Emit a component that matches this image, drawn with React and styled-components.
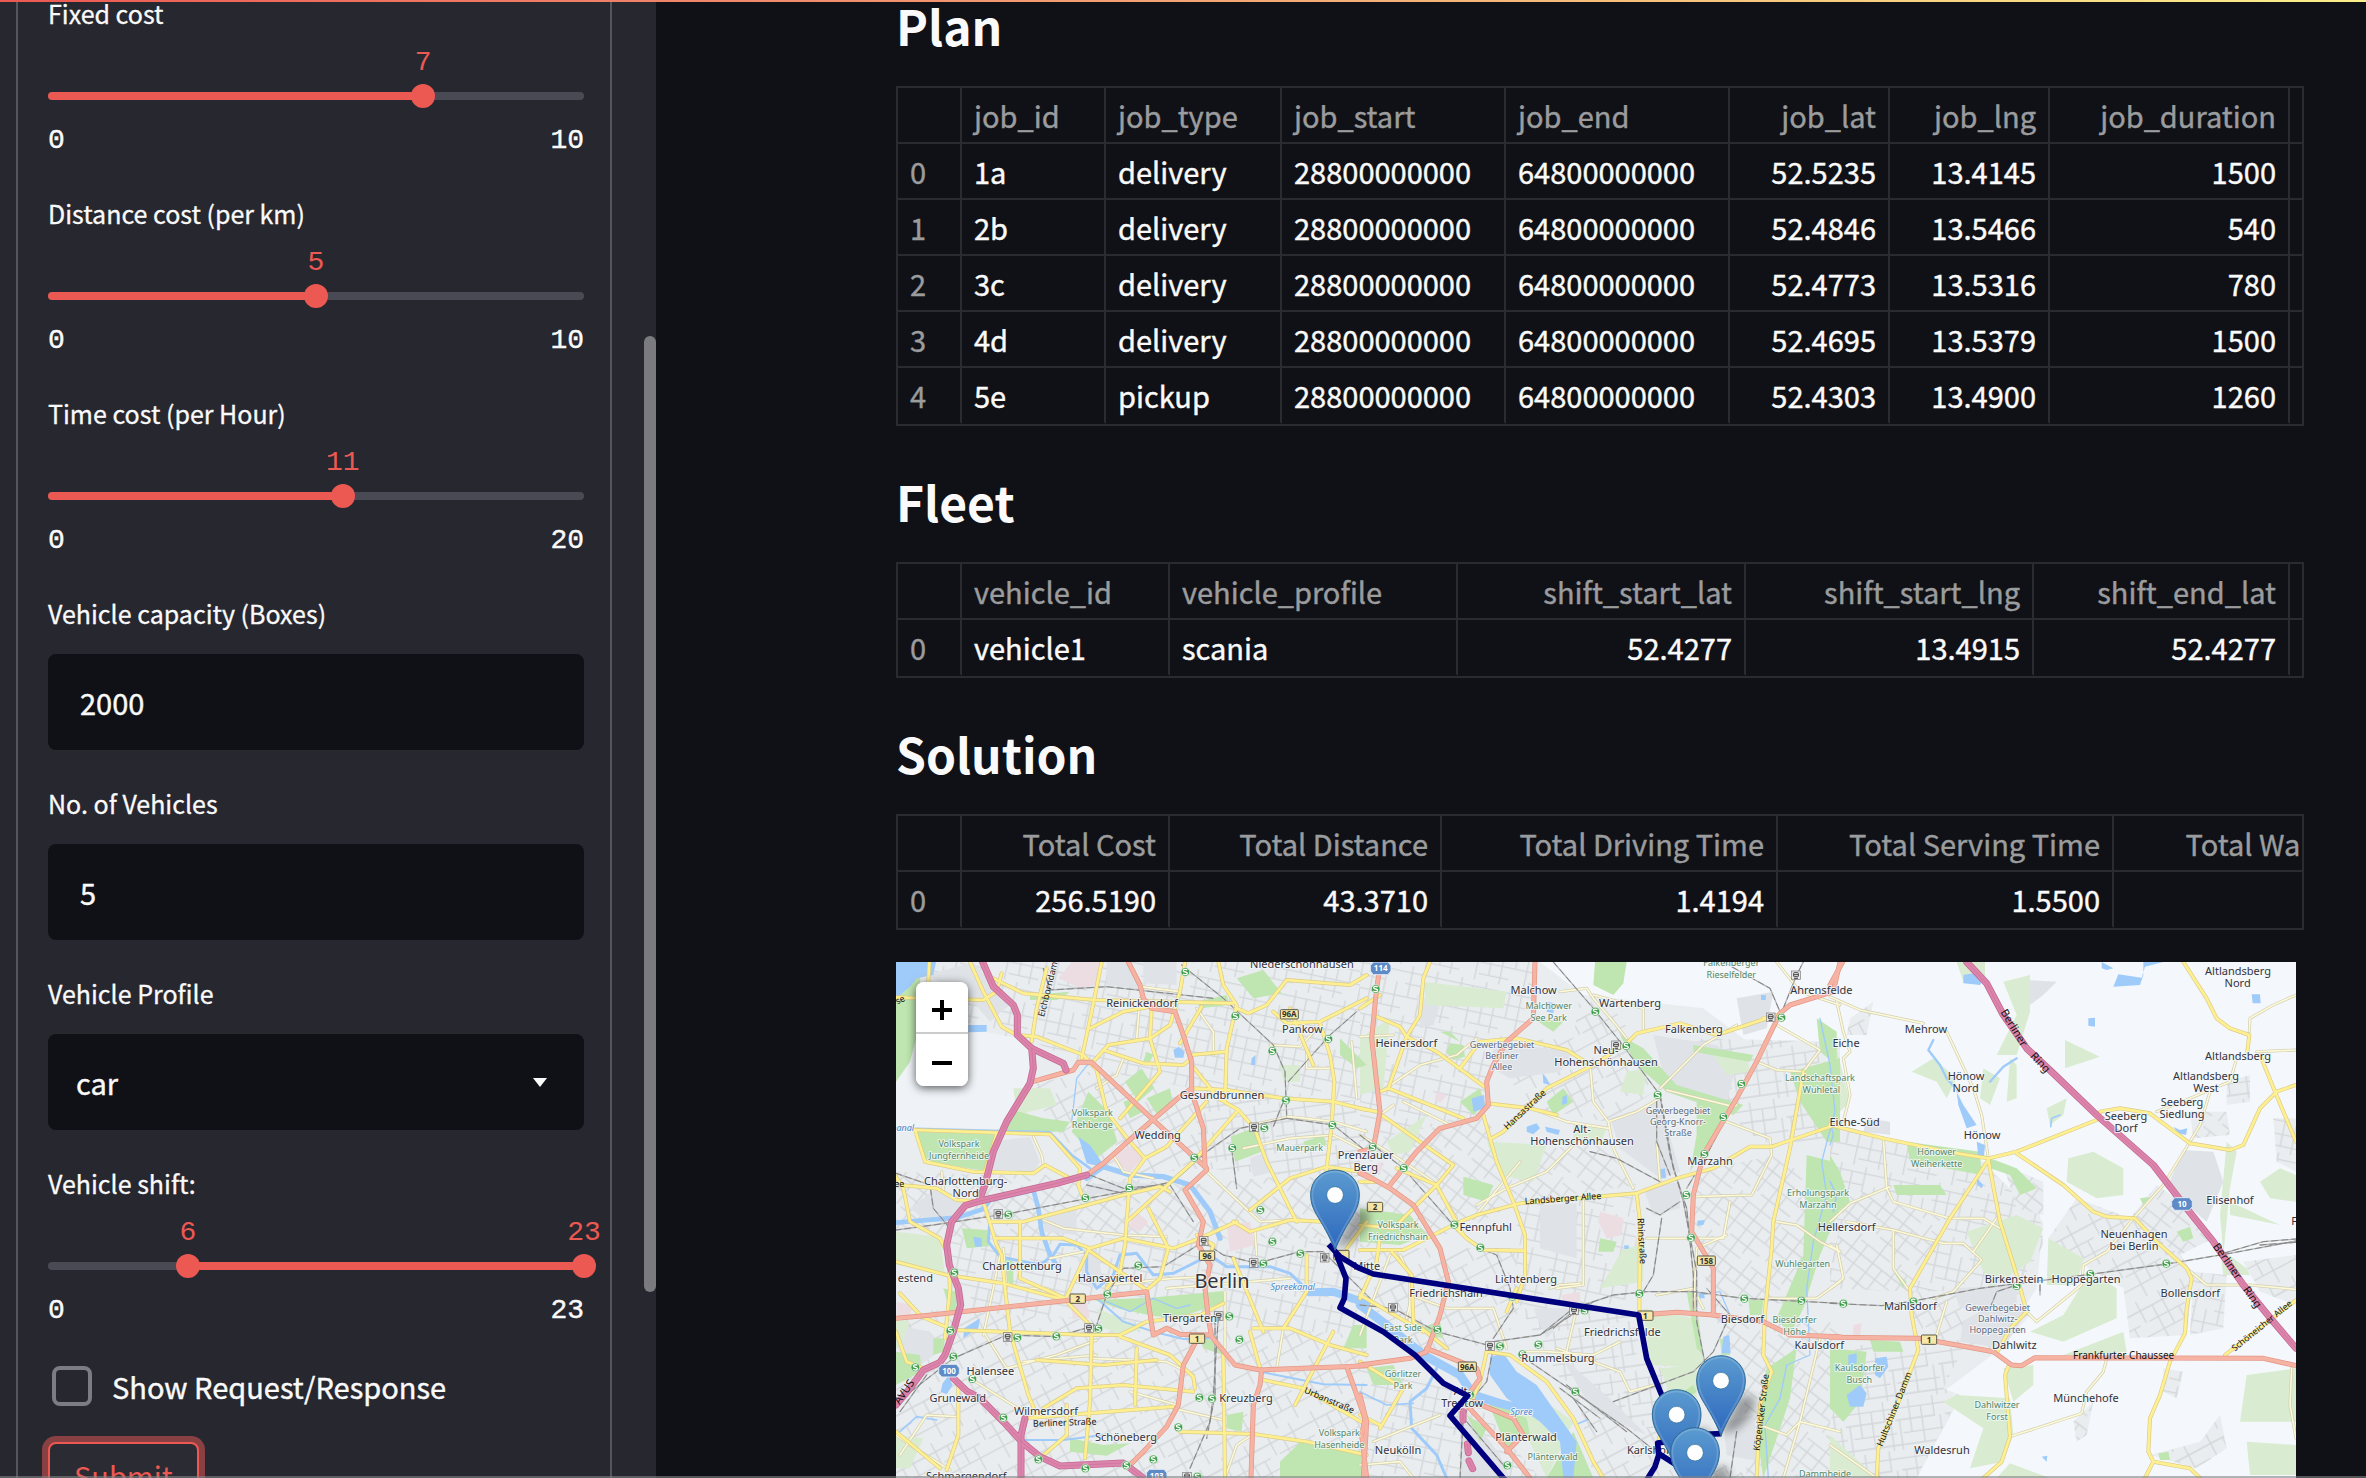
import React, { useId, useState } from "react";
import styled, { createGlobalStyle } from "styled-components";

const sans = `"Noto Sans CJK SC", "Noto Sans", sans-serif`;
const mono = `"Liberation Mono", monospace`;
const c = {
  page: "#101116",
  side: "#272730",
  text: "#fafafa",
  muted: "#9b9c9e",
  line: "#2a2b2f",
  red: "#ec5953",
  track: "#494a54",
};

const GlobalStyle = createGlobalStyle`
  *, *::before, *::after { box-sizing: border-box; }
  body { margin: 0; background: ${c.page}; color: ${c.text}; font-family: ${sans}; overflow: hidden; }
`;

/* ---------- page frame ---------- */

const Page = styled.div`
  display: flex;
  height: 100vh;
  overflow: hidden;
  position: relative;
`;
const Decoration = styled.div`
  position: absolute;
  inset: 0 0 auto 0;
  height: 2px;
  z-index: 5;
  background: linear-gradient(90deg, ${c.red}, #f0876b 30%, #f6c17c 70%, #fbf08a);
`;
const WindowEdge = styled.div`
  position: absolute;
  inset: auto 0 0 0;
  height: 2px;
  z-index: 5;
  background: rgba(130, 131, 134, 0.6);
`;
const Sidebar = styled.aside`
  position: relative;
  flex: 0 0 656px;
  background: ${c.side};
  padding: 0 44px 0 16px;
  overflow: hidden;
`;
const ScrollThumb = styled.div`
  position: absolute;
  right: 0;
  top: 336px;
  width: 12px;
  height: 956px;
  border-radius: 6px;
  background: #7b7b7f;
`;
const Form = styled.form`
  border: solid #55565c;
  border-width: 0 2px;
  padding: 0 26px 0 30px;
  display: flex;
  flex-direction: column;
  align-items: stretch;
  gap: 32px;
  min-height: 100vh;
`;
const Main = styled.main`
  flex: 1;
  min-width: 0;
  padding: 0 62px 0 240px;
  margin-top: -18px;
`;

/* ---------- form controls ---------- */

const Field = styled.div`
  display: flex;
  flex-direction: column;
  margin-top: ${(p) => (p.$first ? "-8px" : "0")};
`;
const Label = styled.label`
  font-size: 25px;
  line-height: 42px;
  margin-bottom: ${(p) => (p.$tight ? "10px" : "20px")};
  -webkit-text-stroke: 0.3px currentColor;
`;
const ValueRow = styled.div`
  position: relative;
  height: 38px;
`;
const Value = styled.output`
  position: absolute;
  top: 0;
  width: 0;
  display: flex;
  justify-content: center;
  font: 28px/38px ${mono};
  color: ${c.red};
`;
const Rail = styled.div`
  position: relative;
  height: 28px;
  display: flex;
  align-items: center;
`;
const Track = styled.div`
  flex: 1;
  height: 8px;
  border-radius: 4px;
`;
const Range = styled.input`
  position: absolute;
  inset: 0 -12px;
  width: calc(100% + 24px);
  height: 28px;
  margin: 0;
  appearance: none;
  background: transparent;
  pointer-events: none;
  &::-webkit-slider-runnable-track { background: transparent; height: 24px; }
  &::-webkit-slider-thumb {
    appearance: none;
    pointer-events: auto;
    width: 24px;
    height: 24px;
    border-radius: 50%;
    background: ${c.red};
  }
`;
const Limits = styled.div`
  display: flex;
  justify-content: space-between;
  margin-top: 12px;
  font: 28px/38px ${mono};
  -webkit-text-stroke: 0.4px currentColor;
`;
const NumberBox = styled.input`
  width: 100%;
  height: 96px;
  border: 0;
  border-radius: 8px;
  padding: 0 32px;
  background: ${c.page};
  color: ${c.text};
  font: 29px ${sans};
  outline: none;
  -webkit-text-stroke: 0.4px currentColor;
`;
const SelectWrap = styled.div`
  position: relative;
  display: flex;
`;
const Select = styled.select`
  flex: 1;
  height: 96px;
  border: 0;
  border-radius: 8px;
  padding: 0 28px;
  appearance: none;
  background: ${c.page};
  color: ${c.text};
  font: 29px ${sans};
  -webkit-text-stroke: 0.4px currentColor;
`;
const Caret = styled.svg`
  position: absolute;
  right: 37px;
  top: 44px;
  pointer-events: none;
`;
const CheckRow = styled.label`
  display: flex;
  align-items: center;
  gap: 20px;
  height: 48px;
  padding-left: 4px;
  font-size: 29px;
  -webkit-text-stroke: 0.4px currentColor;
`;
const CheckBox = styled.input`
  appearance: none;
  width: 40px;
  height: 40px;
  margin: 0;
  border: 4px solid #7c7d82;
  border-radius: 8px;
  &:checked { background: ${c.red}; border-color: ${c.red}; }
`;
const Submit = styled.button`
  align-self: flex-start;
  height: 66px;
  padding: 0 24px;
  border: 2px solid ${c.red};
  border-radius: 8px;
  box-shadow: 0 0 0 6px rgba(236, 89, 83, 0.5);
  background: #2b2b34;
  color: ${c.red};
  font: 29px ${sans};
`;

function Slider({ label, max, initial, first }) {
  const id = useId();
  const [values, setValues] = useState(initial);
  const pct = (v) => `${(v / max) * 100}%`;
  const from = values.length > 1 ? pct(values[0]) : "0%";
  const to = pct(values[values.length - 1]);
  const fill = `linear-gradient(90deg, ${c.track} ${from}, ${c.red} ${from}, ${c.red} ${to}, ${c.track} ${to})`;
  return (
    <Field $first={first}>
      <Label $tight htmlFor={`${id}-0`}>{label}</Label>
      <ValueRow>
        {values.map((v, i) => (
          <Value key={i} htmlFor={`${id}-${i}`} style={{ left: pct(v) }}>{v}</Value>
        ))}
      </ValueRow>
      <Rail>
        <Track style={{ background: fill }} />
        {values.map((v, i) => (
          <Range
            key={i}
            id={`${id}-${i}`}
            type="range"
            aria-label={label}
            min={0}
            max={max}
            value={v}
            onChange={(e) => setValues(values.map((o, j) => (j === i ? Number(e.target.value) : o)))}
          />
        ))}
      </Rail>
      <Limits><span>0</span><span>{max}</span></Limits>
    </Field>
  );
}

function TextField({ label, value }) {
  const id = useId();
  return (
    <Field>
      <Label htmlFor={id}>{label}</Label>
      <NumberBox id={id} type="text" inputMode="numeric" defaultValue={value} />
    </Field>
  );
}

/* ---------- data tables ---------- */

const Heading = styled.h2`
  margin: ${(p) => (p.$first ? "0" : "32px")} 0 20px;
  font-size: 48px;
  line-height: 86px;
  height: 84px;
  font-weight: 700;
`;
const Frame = styled.div`
  border: 2px solid ${c.line};
  overflow: hidden;
`;
const Grid = styled.table`
  table-layout: fixed;
  width: 0;
  border-collapse: separate;
  border-spacing: 0;
  font-size: 29px;
  line-height: 54px;
  white-space: nowrap;
  -webkit-text-stroke: 0.4px currentColor;
`;
const Col = styled.col`
  width: ${(p) => p.$w}px;
`;
const Cell = styled.td`
  height: 56px;
  padding: 0 12px;
  font-weight: 400;
  text-align: ${(p) => (p.$num ? "right" : "left")};
  color: ${(p) => (p.$muted ? c.muted : c.text)};
  border: solid ${c.line};
  border-width: 0 2px 2px 0;
  tr:last-child > & { border-bottom-color: transparent; }
  thead tr:last-child > & { border-bottom-color: ${c.line}; }
`;

function DataTable({ columns, rows }) {
  return (
    <Frame>
      <Grid>
        <colgroup>
          <Col $w={64} />
          {columns.map(([name, w]) => <Col key={name} $w={w} />)}
        </colgroup>
        <thead>
          <tr>
            <Cell $muted />
            {columns.map(([name, , num]) => (
              <Cell as="th" scope="col" key={name} $muted $num={num}>{name}</Cell>
            ))}
          </tr>
        </thead>
        <tbody>
          {rows.map((row, i) => (
            <tr key={i}>
              <Cell as="th" scope="row" $muted>{i}</Cell>
              {columns.map(([name, , num], j) => <Cell key={name} $num={num}>{row[j]}</Cell>)}
            </tr>
          ))}
        </tbody>
      </Grid>
    </Frame>
  );
}

const planColumns = [
  ["job_id", 144], ["job_type", 176], ["job_start", 224], ["job_end", 224],
  ["job_lat", 160, true], ["job_lng", 160, true], ["job_duration", 240, true], ["", 240, true],
];
const planRows = [
  ["1a", "delivery", "28800000000", "64800000000", "52.5235", "13.4145", "1500"],
  ["2b", "delivery", "28800000000", "64800000000", "52.4846", "13.5466", "540"],
  ["3c", "delivery", "28800000000", "64800000000", "52.4773", "13.5316", "780"],
  ["4d", "delivery", "28800000000", "64800000000", "52.4695", "13.5379", "1500"],
  ["5e", "pickup", "28800000000", "64800000000", "52.4303", "13.4900", "1260"],
];
const fleetColumns = [
  ["vehicle_id", 208], ["vehicle_profile", 288], ["shift_start_lat", 288, true],
  ["shift_start_lng", 288, true], ["shift_end_lat", 256, true], ["", 256, true],
];
const fleetRows = [["vehicle1", "scania", "52.4277", "13.4915", "52.4277"]];
const solutionColumns = [
  ["Total Cost", 208, true], ["Total Distance", 272, true], ["Total Driving Time", 336, true],
  ["Total Serving Time", 336, true], ["Total Waiting Time", 336, true],
];
const solutionRows = [["256.5190", "43.3710", "1.4194", "1.5500"]];

/* ---------- map ---------- */

const MapBox = styled.div`
  position: relative;
  width: 100%;
  max-width: 1400px;
  margin-top: 32px;
`;
const MapSvg = styled.svg`
  display: block;
  width: 100%;
  height: auto;
  font-family: "Noto Sans", sans-serif;
`;
const Zoom = styled.div`
  position: absolute;
  left: 20px;
  top: 20px;
  display: flex;
  flex-direction: column;
  border-radius: 8px;
  box-shadow: 0 2px 10px rgba(0, 0, 0, 0.65);
`;
const ZoomButton = styled.button`
  width: 52px;
  height: 52px;
  padding: 6px 0 0;
  border: 0;
  background: #fff;
  display: grid;
  place-items: center;
  &:first-child { border-radius: 8px 8px 0 0; border-bottom: 2px solid #ccc; }
  &:last-child { border-radius: 0 0 8px 8px; }
`;

/* Three neighbouring map sheets; dx is the sheet's shift on the map. */
const sheets = [
  {
    dx: 0,
    pale: [
      "18,190 90,200 380,240 425,290 420,385 350,500 320,522 18,515",
    ],
    urban: [
      [0, "18,21 1430,21 1430,480 1000,440 900,400 620,345 430,260 90,190 18,190"],
      [2, "18,650 290,660 590,660 900,690 1430,640 1430,860 900,870 300,860 18,820"],
      [1, "620,345 905,400 940,640 720,660 560,600 480,500 420,390"],
      [3, "905,400 1430,440 1430,680 940,640"],
      [0, "170,850 1430,850 1430,1220 960,1130 780,1110 180,1110"],
      [1, "18,1060 1430,1140 1430,1569 18,1569"],
    ],
    grey: [
      "110,60 250,21 300,80 370,140 300,200 240,130", "650,21 715,21 745,90 740,100 650,90",
      "60,760 140,700 250,740 180,800 100,790", "470,780 560,750 560,840 460,830",
      "300,560 420,545 450,620 430,650 310,645", "590,690 700,680 830,690 700,715 590,720",
      "760,21 860,21 860,90 760,85", "560,910 620,880 640,980 600,1000", "18,1110 120,1130 160,1180 90,1230 30,1190",
      "1080,610 1130,590 1150,650 1090,665",
    ],
    pink: ["545,21 630,21 620,90 570,100 505,70", "670,590 740,570 760,610 720,650 670,620", "1010,810 1080,800 1095,870 1020,890", "740,770 775,800 750,830 715,815", "540,1040 590,1040 600,1090 550,1090", "20,1040 70,1050 60,1080 20,1080"],
    light: [
      "18,830 150,845 165,960 18,930", "18,1090 60,1100 30,1180 18,1180", "370,400 480,400 500,450 380,480",
      "620,1060 760,1120 700,1140 640,1120", "18,1440 100,1450 60,1540 18,1540", "1170,330 1230,330 1230,380 1180,380",
    ],
    green: [
      "18,120 90,60 95,190 60,320 18,380", "80,530 310,538 320,560 285,648 105,618",
      "595,410 655,470 682,560 620,610 545,530", "380,468 460,490 540,500 520,530 340,530",
      "612,1035 780,1028 1000,1008 1003,1042 860,1090 790,1083 690,1062", "1022,545 1108,512 1115,590 1035,620",
      "1040,70 1120,45 1175,115 1090,130", "705,380 755,340 792,400 745,440", "770,430 840,400 850,455 800,478",
      "215,820 290,825 305,872 230,880", "1170,1520 1230,1462 1430,1500 1430,1569 1170,1569",
      "540,1450 640,1470 720,1465 650,1502 540,1490", "18,1190 90,1200 95,1250 18,1290",
      "770,290 790,300 780,320 760,318", "920,140 1010,120 1020,150 930,160", "420,120 540,110 500,135 420,135",
      "1010,1380 1060,1370 1055,1430 1010,1420", "110,540 170,540 170,580 110,575", "700,440 730,430 760,470 720,490",
      "340,910 370,920 370,990 345,975", "1240,560 1300,540 1310,570 1250,590", "1390,1110 1430,1110 1430,1180 1360,1180",
      "130,1150 165,1150 160,1190 130,1200", "1350,250 1430,330 1400,340 1350,300", "160,1000 200,1010 200,1080 180,1070",
      "930,1140 1010,1180 1000,1200 940,1180",
    ],
    water: [
      "18,21 138,21 130,60 80,70 60,95 18,130", "565,545 600,570 648,640 590,625", "850,285 866,275 884,290 880,308 855,308",
      "235,210 290,210 290,230 235,232", "158,1285 175,1262 188,1290 170,1318 152,1310", "1085,310 1097,300 1095,330 1083,330",
      "222,1120 270,1090 265,1120 220,1150", "250,845 275,850 275,875 255,875",
    ],
    river: [
      [14, "18,803 200,788 280,762 300,735 430,705 445,760 455,830 480,900 500,930"],
      [8, "18,520 400,530 480,532 545,600 600,640"],
      [16, "590,670 640,635 720,660 820,665 900,690 960,770 990,850"],
      [9, "300,790 295,860 330,905 450,930 490,900 510,868 560,870 590,900 590,950 620,1000 670,960 690,900 740,895 790,960 850,955 960,900 1010,935 1140,935 1200,955 1260,1012"],
      [24, "1260,1012 1330,1010 1430,1045"], [6, "620,1030 700,1100 790,1130 880,1152 960,1150"], [6, "1110,1250 1300,1288 1430,1290"],
      [5, "30,1430 80,1385 140,1395"], [6, "390,1455 520,1455 640,1440"], [4, "650,1040 720,1070 790,1030 860,1060 900,1050"], [4, "600,320 560,370 545,500"],
    ],
    tertiary: [
      "750,95 870,110", "740,250 750,130", "920,160 970,230 970,300", "700,310 680,360 620,400", "1085,510 1200,485 1330,500 1430,530",
      "1060,580 1200,550 1330,540 1430,590", "430,545 455,600 460,630", "460,795 520,820 700,840 830,845", "650,990 850,970 960,965",
      "480,910 580,890", "280,1130 350,1240 500,1200 620,1155", "830,1000 1200,970", "1005,1010 1005,1180", "1180,1120 1160,1240",
      "240,1270 400,1370", "600,1210 830,1220 910,1260", "1250,280 1250,340 1330,340", "1385,260 1400,430", "670,600 700,650 790,670",
      "950,650 1110,800 1210,795", "1095,830 1100,900", "18,1440 60,1470 180,1545", "1140,270 1230,275 1290,210",
      "400,1000 470,1000 525,1030", "155,650 160,710", "330,900 310,1000 280,1140", "1005,1569 1040,1470 1090,1437",
      "720,1310 860,1350", "850,1360 1000,1395", "620,1200 400,1220", "340,880 350,1000", "30,1500 110,1380 200,1385",
    ],
    secondary: [
      "118,21 115,80", "18,127 280,135 320,110 335,55", "240,21 280,110 335,215 380,240 440,245 580,300 620,345 650,470 720,560 765,610",
      "300,65 400,115 615,135 1030,145", "470,40 440,160 425,260", "635,21 605,170 575,310", "610,320 655,270 780,250 840,210 870,110 885,21",
      "600,220 700,170 780,155", "785,160 780,250 810,350 690,490", "870,265 935,155", "640,285 760,325 880,330 905,310", "900,300 1010,290",
      "985,21 1000,90 1040,150 1010,280 1005,440", "1040,160 1075,175 1130,150 1190,75 1380,90 1430,60", "1150,170 1190,205 1290,200 1430,130",
      "1200,160 1240,260 1270,330", "1290,205 1320,300 1333,380 1325,510 1310,640 1300,800", "905,400 1010,405 1180,430 1330,440 1430,465",
      "905,330 985,430 1045,465 1085,510", "950,440 830,575 765,610 720,670 710,800 705,870 690,950 650,1000", "1045,465 910,620 710,800",
      "75,525 480,538 570,640 565,690 580,730", "75,525 105,620 250,650 430,655 465,630 540,670", "320,535 285,650", "18,665 40,700 60,800 150,850 175,900",
      "30,690 140,700 200,735 280,740 320,870 335,900 345,1000 360,1130 415,1320 440,1380", "300,800 400,800 590,750 700,720 810,695 840,710",
      "390,800 390,970 525,1030", "320,850 520,850 600,880 700,850 850,880 930,850 1040,800", "595,885 525,1035 620,1130",
      "595,885 770,1005 810,970 835,880 775,760", "1030,800 1080,830 1200,795 1300,800", "1090,510 1130,620 1200,760 1220,800",
      "1080,765 1200,670 1310,635 1410,650", "18,920 170,960 340,985 525,1035", "175,900 180,1000 165,1150", "95,1085 30,1015",
      "95,1085 190,1125 600,1140 690,1140 770,1100 930,1080 1000,1045", "605,1140 600,1340 585,1510", "440,1215 640,1230 800,1215", "740,1180 735,1350",
      "690,1145 840,1200 910,1265 915,1300", "460,1360 560,1300 700,1290 910,1310", "400,1390 850,1355", "870,1430 1090,1437 1250,1460 1430,1500",
      "1000,1190 1005,1569", "1080,1130 1110,1240", "1120,1275 1240,1300 1430,1410", "1090,1120 1200,1120 1320,1170 1430,1200",
      "1330,1130 1215,1350", "170,1545 205,1440 205,1290", "18,1430 150,1540", "450,1510 530,1440 530,1350", "18,1130 50,1220 100,1240",
      "1370,880 1430,800", "1030,910 1120,1130", "1250,900 1250,1010 1180,1120", "920,840 970,870 960,900",
    ],
    primary: [
      "590,660 640,625 730,545 870,425 905,400", "715,21 750,90 760,130 785,160 855,170 880,240 905,320 905,410 940,520 945,630 950,645 885,705 940,800 925,870 960,930 945,1000 955,1090 965,1145 1035,1230 1110,1245 1360,1235 1430,1232",
      "420,382 550,345 565,322 605,322 790,495 950,640", "18,1090 95,1083 525,1037 770,1010 780,1075 790,1140 830,1120 870,1138 960,1140",
      "915,1165 880,1230 865,1350 830,1415 760,1490 720,1530", "1115,1245 1110,1290 1090,1350 1083,1569", "1370,1235 1425,1390 1415,1440 1430,1569", "1410,655 1440,670",
    ],
    motorway: [
      "278,21 310,95 370,150 382,180 382,240 425,280 430,340 420,385 350,500 310,590 285,690 270,730", "425,280 520,325 528,345",
      "590,660 500,685 270,738 225,752 185,800 170,870 178,930 205,1000 212,1050 190,1130 165,1200 150,1222 100,1245 60,1300 18,1350",
      "190,1270 230,1308 270,1330 340,1400 400,1465 450,1505 510,1533 700,1524 760,1569", "405,1390 393,1440 393,1569",
    ],
    rail: [
      "460,40 480,105 650,95 970,130", "875,30 1000,130 1150,270 1185,350 1190,480", "1195,380 1320,240 1400,170",
      "1190,490 1050,520 950,590 850,680 700,710 360,775 130,810 18,825", "1190,490 1330,510 1430,590", "1025,580 1040,700",
      "940,860 1000,900 1100,925 1230,890 1300,890 1440,1030", "650,1020 700,940 820,935 940,860", "650,1020 620,1110 500,1145 350,1140 190,1210 18,1345",
      "985,1085 970,1320 960,1400 900,1540", "600,660 700,700 820,690", "590,690 700,715", "840,690 910,800", "30,1370 110,1260", "18,655 120,690 130,760 180,820",
      "1180,440 1150,515", "975,1090 975,1320 950,1450",
    ],
    towns: [
      ["Niederschönhausen", 1236, 27], ["Reinickendorf", 756, 144], ["Pankow", 1237, 222], ["Gesundbrunnen", 996, 420], ["Wedding", 803, 541],
      ["Charlottenburg-", 227, 679], ["Nord", 227, 714], ["Charlottenburg", 396, 932], ["Hansaviertel", 660, 970], ["Tiergarten", 900, 1090],
      ["Halensee", 301, 1247], ["Grunewald", 203, 1328], ["Wilmersdorf", 468, 1367], ["Kreuzberg", 1068, 1328], ["Schöneberg", 708, 1445],
      ["Schmargendorf", 229, 1563], ["Prenzlauer", 1427, 600], ["Berg", 1427, 636], ["estend", 76, 970], ["Mitte", 1430, 932],
    ],
    city: [["Berlin", 996, 976]],
    parks: [
      ["Volkspark", 607, 473], ["Rehberge", 607, 509], ["Volkspark", 207, 566], ["Jungfernheide", 207, 602], ["Mauerpark", 1229, 579],
      ["Volkspark", 1348, 1432], ["Hasenheide", 1348, 1468],
    ],
    works: [],
    waters: [["Spreekanal", 1208, 996], ["anal", 46, 518]],
    streets: [
      ["Eichborndamm", 476, 90, -76, 27], ["Berliner Straße", 524, 1402, -2, 27], ["Urbanstraße", 1318, 1335, 23, 27], ["AVUS", 42, 1310, -55, 33], ["ee", 28, 687, 0, 27], ["se", 30, 134, -25, 27],
    ],
    s: "886,51 1036,183 1147,288 1315,252 1188,436 1123,519 1027,579 1327,510 913,608 718,699 586,729 355,779 193,953 745,932 1147,860 1231,896 1120,926 652,1018 181,1127 190,1205 76,1237 247,1272 382,1148 499,1144 625,1121 1018,1084 1048,1154 928,1328 966,1331 340,1388 445,1513 586,1540 709,1531 790,1513 865,1417 1111,765 922,1565",
    station: "1092,517 325,777 941,858 1091,924 1304,908 353,1146 597,1119 986,1083 891,1565",
    shields: [["96A", 1198, 178], ["96", 951, 902], ["2", 563, 1031], ["1", 921, 1151], ["", 1354, 900]],
    autobahn: [["100", 177, 1247], ["103", 800, 1562]],
  },
  {
    dx: 1410,
    pale: [],
    urban: [
      [0, "0,21 530,21 500,210 400,260 380,460 130,640 0,560"], [1, "660,120 780,180 900,400 740,500 480,450 420,260 640,250"],
      [3, "1000,250 1440,260 1440,560 1200,560 1000,380"], [2, "0,560 380,480 480,740 300,830 0,880"], [1, "0,880 460,880 500,1000 430,1180 200,1190 0,1040"],
      [0, "470,740 820,710 840,1020 640,1080 470,1050"], [2, "1000,650 1250,600 1380,700 1330,1040 1060,1060 990,800"],
      [3, "480,1060 840,1080 830,1200 1010,1250 900,1440 640,1340"], [0, "0,1240 320,1310 540,1569 0,1569"], [1, "650,1300 900,1440 1180,1569 700,1569"],
      [2, "1060,1080 1440,1100 1440,1569 1160,1569 1150,1250"], [0, "0,340 380,400 300,500 100,480"], [2, "720,560 830,690 480,740 440,600"],
    ],
    grey: [
      "400,260 640,290 600,350 450,370 395,340", "750,490 900,440 960,650 900,670 780,580", "880,240 1070,270 1130,330 1100,440 920,400",
      "540,750 650,745 650,910 540,880", "1130,130 1240,110 1220,220 1150,240", "850,700 960,680 960,760 880,780", "170,120 240,150 220,210 180,220",
      "600,1200 760,1340 860,1440 700,1370", "520,1060 640,1060 560,1150", "1090,1400 1180,1380 1200,1520 1100,1500", "300,1340 420,1500 450,1569 300,1569",
    ],
    pink: ["720,770 790,790 785,840 740,850 715,800", "230,410 260,420 240,445 225,430", "30,630 70,620 60,660 30,655", "605,1020 660,1010 660,1050 610,1050"],
    light: [
      "190,80 440,110 430,160 200,150", "800,350 860,340 850,420 780,410", "850,1060 1000,1090 1040,1240 870,1230", "380,560 560,570 520,680 420,660",
      "790,880 850,870 850,980 720,1000", "640,500 740,520 720,570 640,560", "900,1240 1010,1230 1010,1400 940,1350", "1060,300 1160,300 1170,350 1100,360",
      "0,250 90,190 70,400 0,420", "460,1300 530,1320 640,1400 560,1569 480,1400", "80,560 200,480 150,590 100,600",
    ],
    green: [
      "705,21 800,21 790,85 760,120 700,90", "1290,350 1440,310 1440,560 1400,560 1320,440", "780,240 850,280 950,390 1150,450 1120,480 920,410 830,330",
      "1010,440 1110,450 1040,570 990,650 1010,540", "310,665 400,690 380,740 310,720", "0,760 150,780 200,840 120,870 0,860", "720,850 770,860 760,890 715,890",
      "1340,600 1420,620 1440,760 1380,900 1330,1060 1290,1140 1250,1090 1330,900", "380,1330 500,1390 510,1440 440,1480", "270,265 310,270 315,305 280,315 258,290",
      "520,190 610,200 580,230", "560,440 610,400 640,440 580,480", "1080,1150 1110,1160 1110,1200 1085,1200", "20,1240 100,1230 130,1290 40,1290",
      "640,1430 700,1569 560,1569 600,1500", "1000,270 1180,300 1170,320 1000,290", "1370,190 1430,230 1430,330 1380,290", "300,440 360,400 375,450 340,480",
      "1220,1240 1310,1180 1290,1330 1210,1569 1190,1430", "240,230 300,260 270,230", "980,1010 1005,1010 1030,1200 1010,1180", "1165,1035 1210,1035 1205,1080 1170,1080",
      "180,1120 240,1100 250,1150 200,1140", "320,1380 380,1420 360,1460", "940,1330 1000,1290 1010,1310 950,1350",
    ],
    water: [
      "335,430 372,420 375,460 340,470", "500,515 530,505 540,520 520,538 500,530", "555,515 600,525 595,540 560,530", "608,425 620,420 622,445 606,450",
      "895,645 915,640 918,670 897,670", "1090,1145 1108,1140 1112,1195 1085,1195", "560,140 585,145 580,175 560,170", "390,1205 430,1195 470,1250 530,1290 600,1390 650,1460 640,1569 610,1569 600,1460 540,1400 440,1330 390,1260",
      "548,355 560,370 570,390 550,385", "1012,797 1035,795 1030,810 1012,812", "1015,1010 1030,1012 1035,1030 1018,1030", "1203,120 1218,120 1217,135 1203,135", "793,870 808,872 805,882 793,882",
    ],
    river: [
      [26, "0,1050 80,1110 140,1160 200,1205 300,1260 340,1320 420,1345 480,1360"], [9, "230,1240 200,1300 150,1340 155,1420 230,1500 260,1569"], [5, "0,1310 80,1350 160,1345"],
      [4, "1380,190 1410,330 1425,470 1385,620 1400,720 1360,860 1340,1000 1350,1200 1280,1230 1260,1330 1215,1410 1225,1569"], [5, "645,1410 680,1395"], [4, "1020,1020 1080,1010 1110,1080"],
    ],
    tertiary: [
      "600,110 680,100 700,130 760,200 800,250", "850,230 850,160 700,120", "0,245 100,240", "70,405 180,330 290,300 350,250", "60,480 100,450", "690,330 700,440 745,500 760,580 820,700",
      "745,500 830,470 900,430", "900,400 1030,270 1130,210", "1250,210 1380,285 1330,350 1290,560", "1190,320 1250,345 1330,350", "920,405 1120,455 1130,450", "350,750 440,700 560,650 650,560",
      "1100,500 1230,550 1235,600 1175,720 1000,725", "1110,740 1090,850 860,850", "670,730 670,990 590,1000", "0,540 100,600 220,680 290,790", "150,1020 260,1060 400,1060 440,1180",
      "590,1180 780,1250 810,1310 900,1285", "500,1190 560,1190 700,1200 780,1160", "1250,800 1310,810 1380,860 1440,890", "1225,1030 1370,1030 1440,980", "270,510 130,440", "500,455 620,500 745,520",
      "340,790 480,620", "620,1190 650,1060", "0,1140 90,900", "120,900 150,960 150,1100", "1200,1410 1280,1440 1320,1400 1440,1430", "1380,1150 1320,1400 1270,1569", "0,1530 120,1520 160,1569", "1000,1060 1010,880 1100,840",
      "890,560 900,680", "1030,1060 1000,1000 890,1020", "1250,21 1320,110 1440,150", "40,1460 240,1380", "160,1000 140,1090", "570,1000 600,990 660,985",
    ],
    secondary: [
      "210,21 190,70 180,180 140,245 110,330 85,400 60,410", "0,160 60,120", "50,185 120,215 140,245 230,290 380,400", "300,340 360,260 470,250 620,285 660,310 690,330", "700,330 800,265 830,235 960,205 1070,240 1250,180 1210,190",
      "395,550 430,530 560,400 700,330", "380,445 510,460 590,480", "370,480 410,620 460,740 495,840 495,960 470,1040", "85,400 310,490", "0,460 50,470 280,630 230,690 100,820 0,810", "300,800 350,780 480,745 830,715 950,670 1060,640 1170,575 1235,575 1440,505",
      "1330,350 1290,580 1240,800 1235,880 1215,1070 1210,1200 1235,1250 1200,1350 1190,1569", "830,715 840,800 838,1080", "0,885 130,885 280,810 320,850 370,885 490,887", "95,890 155,960 160,1100 260,1180", "0,1020 190,1130",
      "230,690 310,840", "380,1190 450,1200 560,1280 640,1390 700,1520 730,1569", "380,1190 360,1280 330,1350", "0,1220 130,1300 60,1420", "60,840 50,920 0,1030", "900,1440 890,1480", "0,680 50,680", "60,1410 0,1380", "110,640 230,690",
      "470,1000 440,1070",
    ],
    primary: [
      "62,21 50,100 35,250 60,470 40,580 0,590", "525,21 520,190 440,260 400,330 380,380 385,450 350,490 240,520 170,590 90,690", "0,650 90,700 160,750 240,880 265,980 240,1080 200,1190 150,1210 0,1230", "200,1180 350,1240 360,1270 310,1340",
      "1440,21 1420,110 1290,150 1260,175 1190,320 1130,430 1030,600 1000,720 995,830 1060,940 1060,1080", "840,1080 950,1072 1060,1080 1210,1100 1290,1140 1440,1145", "340,1340 460,1390 490,1440 440,1490", "310,1340 440,1480 510,1569", "0,1320 20,1400 10,1569",
    ],
    motorway: ["309,1370 309,1395", "322,1467 325,1493", "327,1518 338,1541"],
    rail: [
      "580,21 700,160 780,260 900,420 930,600 970,740 1010,950 1010,1100 1060,1350", "900,420 940,640 980,760 1000,960 1000,1080", "890,440 890,560 930,660", "0,540 130,640 280,810 360,880 410,900 450,1000", "0,1050 100,1060 230,1130 400,1175",
      "400,1150 460,1060 450,1000", "400,1160 540,1140 640,1060 760,1020 860,1010 1000,1010 1150,1030 1440,1045", "540,1140 700,1040", "580,1120 650,1060", "480,1200 640,1310 800,1420 900,1500 1000,1569", "600,1300 720,1390", "620,1290 800,1430", "640,1330 710,1430",
      "760,1340 1000,1250 1060,1190 1110,1080 1040,1000", "690,590 770,610 900,680", "860,760 900,780 960,740", "1130,1430 1110,1569", "300,1569 310,1380", "400,1180 380,1280 330,1340 300,1420", "1090,21 1230,100 1260,170", "1250,200 1040,600 980,700", "320,1400 430,1530", "905,790 880,960 850,1010", "1270,160 1310,60 1330,21",
    ],
    towns: [
      ["Malchow", 521, 105], ["Wartenberg", 810, 144], ["Falkenberg", 1002, 222], ["Heinersdorf", 139, 264], ["Neu-", 738, 286], ["Hohenschönhausen", 738, 322], ["Alt-", 666, 522], ["Hohenschönhausen", 666, 558],
      ["Marzahn", 1050, 618], ["Fennpfuhl", 377, 815], ["Lichtenberg", 498, 971], ["Friedrichshain", 258, 1013], ["Friedrichsfelde", 787, 1130], ["Rummelsburg", 594, 1208], ["Biesdorf", 1147, 1091], ["Alt-", 307, 1308], ["Treptow", 307, 1345],
      ["Plänterwald", 498, 1445], ["Neukölln", 114, 1484], ["Karlshorst", 880, 1484], ["Ahrensfelde", 1384, 105],
    ],
    city: [],
    parks: [
      ["Falkenberger", 1114, 24], ["Rieselfelder", 1114, 59], ["Malchower", 566, 152], ["See Park", 566, 188], ["Landschaftspark", 1380, 368], ["Wuhletal", 1384, 404], ["Erholungspark", 1374, 713], ["Marzahn", 1374, 749], ["Wuhlegarten", 1328, 925],
      ["Biesdorfer", 1304, 1093], ["Höhe", 1304, 1129], ["Volkspark", 114, 808], ["Friedrichshain", 114, 844], ["East Side", 129, 1117], ["Park", 129, 1153], ["Görlitzer", 129, 1255], ["Park", 129, 1291], ["Plänterwald", 578, 1504], ["Dammheide", 1395, 1557],
    ],
    works: [["Gewerbegebiet", 426, 269], ["Berliner", 426, 302], ["Allee", 426, 335], ["Gewerbegebiet", 954, 467], ["Georg-Knorr-", 954, 500], ["Straße", 954, 533]],
    waters: [["Spree", 484, 1370]],
    streets: [["Hansastraße", 494, 463, -43, 27], ["Landsberger Allee", 609, 730, -4, 27], ["Rhinstraße", 846, 858, 87, 27], ["Köpenicker Straße", 1203, 1372, -83, 27]],
    s: "47,102 706,170 799,273 893,420 1144,387 1090,486 1033,597 979,720 993,848 838,1016 1153,1031 1324,1037 38,576 131,639 283,809 361,878 232,1124 420,1174 535,1169 487,1198 646,1310 442,1531 1264,188 330,1319 457,1025 674,1066",
    station: "1308,61 1232,187 768,271 99,1058 390,1173 642,1066",
    shields: [["2", 45, 756], ["158", 1039, 917], ["1", 856, 1082], ["96A", 322, 1235]],
    autobahn: [["114", 62, 40]],
  },
  {
    dx: 2820,
    pale: [],
    urban: [
      [0, "0,520 160,550 380,600 470,640 630,780 640,870 560,1000 340,1030 240,1010 0,1000"], [2, "60,700 200,740 360,800 240,1010 50,1000 20,860"], [1, "240,1010 560,1000 600,1080 500,1190 250,1150"],
      [3, "80,1170 400,1180 340,1300 390,1320 260,1569 0,1569 0,1400"], [1, "655,850 740,730 900,790 1040,880 1090,960 1070,1140 900,1150 880,1000 760,930"], [2, "900,790 980,690 1080,760 1150,850 1050,900"], [0, "1090,950 1190,960 1180,1120 1080,1140"],
      [0, "1330,490 1398,490 1398,650 1340,620"], [3, "1190,380 1260,360 1260,440 1190,450"], [2, "1080,470 1190,470 1200,540 1090,550"], [1, "1240,920 1398,900 1398,1050 1290,1010"], [1, "960,1500 1110,1460 1170,1380 1190,1480 1100,1540"],
      [0, "1000,1240 1060,1250 1040,1330 1000,1310"], [1, "60,190 130,140 110,240 50,240"], [2, "520,630 640,680 640,780 560,760"], [2, "730,1400 790,1340 770,1440 740,1460"],
    ],
    grey: ["1060,585 1150,590 1180,680 1130,800 1010,700", "530,100 590,75 680,80 640,120 600,150 540,130", "400,1100 480,1050 590,1070 520,1180 390,1160", "110,490 180,500 180,540 100,530", "370,1000 560,990 560,1050 390,1060"],
    pink: ["70,1110 95,1105 90,1140 70,1145"],
    light: [
      "380,21 465,21 465,70 400,80", "520,80 600,60 600,170 560,300 500,300 560,180", "705,255 810,305 705,340", "245,350 310,310 380,370 350,430 320,380", "715,610 790,590 880,640 880,720 800,730 710,680",
      "655,850 760,910 740,990 650,990", "780,950 860,1000 860,1090 700,1160 600,1130 700,1080", "1190,560 1220,590 1200,700 1180,900 1170,780", "1290,680 1350,640 1398,660 1398,740 1320,730", "380,1320 540,1330 550,1440 520,1520 420,1540 460,1420 340,1340",
      "1250,1260 1398,1240 1398,1400 1230,1400", "1250,1460 1398,1470 1398,1560 1260,1560", "520,1240 610,1230 610,1290 550,1340", "1200,740 1350,810 1200,780", "650,460 710,430 700,480 660,510", "500,1569 540,1525 660,1569", "0,250 20,280 60,440 0,500",
      "460,340 510,370 480,450 450,430", "700,1200 880,1130 890,1190 760,1200", "540,310 560,330 560,430 530,440", "1170,880 1250,940 1260,960 1180,960", "410,830 560,780 640,820 600,920 480,1000", "0,1440 140,1569 0,1569",
    ],
    green: ["230,560 450,590 455,660 240,620", "190,690 330,690 350,720 200,720", "480,610 560,640 620,700 570,720 540,660 480,640", "0,330 20,350 20,500 0,510", "0,1180 110,1190 90,1340 40,1400 0,1360", "1040,830 1080,815 1090,850 1060,860", "185,940 230,980 220,1000", "120,1155 210,1160 220,1190 130,1190", "985,1495 1015,1490 1020,1515 990,1515", "0,600 30,650 60,740 0,790", "930,730 960,725 940,750"],
    water: [
      "55,1200 80,1195 80,1225 55,1230", "135,1210 170,1205 175,1235 150,1270 135,1260", "50,1320 90,1290 110,1315 100,1355 60,1355", "1265,118 1290,118 1292,145 1268,145", "775,190 795,188 795,215 775,212", "850,95 865,58 935,68 945,35 1000,21 940,21 940,60 930,90",
      "400,60 430,55 460,75 450,90 400,85", "1030,515 1050,525 1072,520 1068,540 1045,535", "815,21 850,40 830,45 815,40", "635,1505 652,1502 650,1520", "380,410 400,450 440,510 410,520 385,450", "440,560 465,570 462,605 445,605", "440,670 460,690 455,700 442,690",
    ],
    river: [[7, "310,255 295,285 330,330 350,370 385,410"], [7, "560,310 520,335 480,380"], [5, "690,480 665,490 662,515"], [4, "0,570 10,540 0,500"], [5, "0,680 20,720 10,770"]],
    tertiary: [
      "0,125 90,165 280,205", "20,140 40,230 60,290 40,310 60,420 40,500", "350,230 430,400 455,480 475,610", "160,550 170,700 190,740 360,790 460,790 510,820", "0,800 60,745 180,695", "50,800 190,825 340,865 400,865 455,915 370,1010 310,1030", "190,825 190,940 240,1010",
      "20,870 40,970 0,1000", "350,1040 320,1140", "910,790 1000,690 1080,560 1110,510 1140,410", "910,790 830,890 760,930 755,990 620,1100 590,1070", "500,790 430,890", "830,1210 820,1250 770,1310 755,1375 540,1445", "1398,120 1330,150 1260,190 1258,230",
      "1280,290 1398,285", "1070,940 1130,990 1260,990 1398,1003", "1385,1240 1380,1350 1398,1450", "980,470 1080,430 1200,380 1220,310", "0,1470 140,1569", "0,870 30,890",
    ],
    secondary: [
      "0,510 160,550 350,590 475,610 560,590 800,495 810,470 870,460 960,475 1080,565 1200,585 1240,570 1290,460 1340,410 1398,390", "1060,21 1130,130 1160,190 1200,220 1258,240 1252,290", "1290,300 1335,410 1398,560", "475,615 360,790 240,1000 245,1080 265,1185 210,1330 145,1480 140,1569",
      "475,615 510,800 560,960 590,1070 540,1120 500,1195", "560,595 700,690 790,770 830,785 915,790 980,860 1070,940 1085,970 1070,1060 1065,1135 1020,1220 990,1320 960,1390 955,1490 970,1520 1080,1540 1110,1569", "970,1520 945,1569", "535,1235 525,1260 540,1445 515,1520 460,1569", "1185,1200 1398,1035",
    ],
    primary: ["38,21 0,90", "0,1147 265,1150 380,1170 490,1190 545,1230 575,1232 615,1208 1300,1210 1398,1232"],
    motorway: ["410,21 470,85 520,180 590,280 670,355 800,480 970,630 1070,760 1150,860 1240,990 1330,1100 1398,1180"],
    rail: ["0,1045 155,1052 240,1040 450,1000 780,958 1010,927 1200,895 1398,858", "1180,895 1300,860 1398,852", "480,1060 500,1010 560,990", "630,990 630,1020", "1290,870 1398,862"],
    towns: [
      ["Altlandsberg", 1224, 48], ["Nord", 1223, 84], ["Mehrow", 288, 222], ["Eiche", 48, 264], ["Hönow", 408, 363], ["Nord", 407, 399], ["Hönow", 456, 540], ["Altlandsberg", 1224, 303], ["Altlandsberg", 1128, 363], ["West", 1128, 399],
      ["Seeberg", 1056, 441], ["Siedlung", 1056, 477], ["Seeberg", 888, 484], ["Dorf", 888, 520], ["Eiche-Süd", 74, 500], ["Elisenhof", 1200, 735], ["Hellersdorf", 50, 815], ["Neuenhagen", 912, 836], ["bei Berlin", 912, 872],
      ["Birkenstein", 552, 971], ["Hoppegarten", 768, 971], ["Bollensdorf", 1081, 1013], ["Mahlsdorf", 241, 1052], ["Dahlwitz", 553, 1169], ["Kaulsdorf", -32, 1169], ["Münchehofe", 768, 1328], ["Waldesruh", 336, 1484], ["F", 1392, 797],
    ],
    city: [],
    parks: [["Hönower", 320, 590], ["Weiherkette", 320, 626], ["Kaulsdorfer", 88, 1237], ["Busch", 88, 1273], ["Dahlwitzer", 501, 1348], ["Forst", 501, 1384]],
    works: [["Gewerbegebiet", 503, 1057], ["Dahlwitz-", 503, 1090], ["Hoppegarten", 503, 1123]],
    waters: [],
    streets: [
      ["Berliner", 553, 218, 59, 33], ["Ring", 632, 322, 47, 33], ["Berliner", 1193, 918, 55, 33], ["Ring", 1268, 1026, 55, 33], ["Frankfurter Chaussee", 881, 1202, 0, 30], ["Hultschiner Damm", 192, 1362, -68, 27], ["Schöneicher Allee", 1295, 1112, -39, 27],
    ],
    s: "40,1046 250,1040 560,993 781,957 1009,926",
    station: "",
    shields: [["1", 297, 1154]],
    autobahn: [["10", 1056, 747]],
  },
];

const points = (s) => s.split(" ").filter(Boolean).map((p) => p.split(",").map(Number));

const Layer = ({ draw }) =>
  sheets.map((sheet) => (
    <g key={sheet.dx} transform={`translate(${sheet.dx} 0)`}>{draw(sheet)}</g>
  ));

const Areas = ({ kind, fill }) => (
  <Layer draw={(s) => s[kind].map((p, i) => <polygon key={i} points={p} fill={fill} />)} />
);
const Roads = ({ kind, color, width }) => (
  <g fill="none" stroke={color} strokeWidth={width} strokeLinejoin="round" strokeLinecap="round">
    <Layer draw={(s) => s[kind].map((p, i) => <polyline key={i} points={p} />)} />
  </g>
);
const Names = ({ kind, size, color, italic, weight = 400 }) => (
  <g
    fontSize={size}
    fill={color}
    fontStyle={italic ? "italic" : "normal"}
    fontWeight={weight}
    textAnchor="middle"
    stroke="#f4f7f9"
    strokeOpacity="0.85"
    strokeWidth="6"
    strokeLinejoin="round"
    paintOrder="stroke"
  >
    <Layer draw={(s) => s[kind].map(([t, x, y], i) => <text key={i} x={x} y={y + size * 0.36}>{t}</text>)} />
  </g>
);

const streetPatterns = [
  [12, "M0 20H150M0 55H90M0 95H150M60 130H150M15 0V95M50 20V150M90 0V130M125 55V150"],
  [-28, "M0 30H150M30 70H150M0 110H150M20 0V70M60 30V150M95 0V110M130 70V150"],
  [38, "M0 15H110M0 50H150M0 85H150M40 125H150M25 15V125M70 0V150M105 50V150M140 0V85"],
  [-8, "M0 25H150M0 60H120M20 100H150M0 135H150M12 60V150M45 0V100M80 25V135M118 0V60M135 60V150"],
];

function Pin({ x, y }) {
  return (
    <g transform={`translate(${x} ${y})`}>
      <path d="M0 -4 L50 -110 Q92 -140 104 -104 Q104 -66 48 -20Z" fill="#000" opacity="0.34" filter="url(#soft)" />
      <path
        d="M0 0C-10 -28 -28 -62 -50 -98C-66 -124 -73 -142 -73 -168A73 73 0 0 1 73 -168C73 -142 66 -124 50 -98C28 -62 10 -28 0 0Z"
        fill="url(#pin)"
        stroke="#2e6c97"
        strokeWidth="3"
      />
      <path d="M0 -14C-10 -40 -28 -70 -46 -100C-61 -125 -68 -144 -68 -168A68 68 0 0 1 68 -168C68 -144 61 -125 46 -100C28 -70 10 -40 0 -14Z" fill="none" stroke="#fff" strokeOpacity="0.16" strokeWidth="5" />
      <circle cy="-166" r="25" fill="#fff" stroke="#2e6c97" strokeWidth="2" />
    </g>
  );
}

function BerlinMap() {
  return (
    <MapSvg viewBox="18 21 4200 1548" role="img" aria-label="Route map of Berlin">
      <defs>
        {streetPatterns.map(([angle, d], i) => (
          <pattern key={i} id={`streets${i}`} width="150" height="150" patternUnits="userSpaceOnUse" patternTransform={`rotate(${angle})`}>
            <rect width="150" height="150" fill="#e9edf0" />
            <path d={d} stroke="#d3d7d9" strokeWidth="4" fill="none" />
          </pattern>
        ))}
        <linearGradient id="pin" x1="0" y1="0" x2="0" y2="1">
          <stop offset="0" stopColor="#5b9bd0" />
          <stop offset="1" stopColor="#2c67bd" />
        </linearGradient>
        <filter id="soft" x="-50%" y="-50%" width="200%" height="200%"><feGaussianBlur stdDeviation="13" /></filter>
      </defs>
      <rect x="18" y="21" width="4200" height="1548" fill="#f4f8fc" />
      <polygon points="18,21 1950,21 2080,120 2440,160 2600,280 2830,500 2980,550 3280,620 3460,800 3440,1000 3320,1190 3160,1310 3210,1330 3080,1569 18,1569" fill="#e9edf0" />
      <polygon points="2410,21 2620,60 2750,130 2840,280 2800,21" fill="#f4f8fc" />
      <Areas kind="pale" fill="#eff3f7" />
      <Layer draw={(s) => s.urban.map(([n, p], i) => <polygon key={i} points={p} fill={`url(#streets${n})`} />)} />
      <Areas kind="grey" fill="#dfe3e7" />
      <Areas kind="pink" fill="#ecdde2" />
      <Areas kind="light" fill="#d9ecd1" />
      <Areas kind="green" fill="#bfe5b0" />
      <Areas kind="water" fill="#9fcbfb" />
      <g fill="none" stroke="#9fcbfb" strokeLinejoin="round" strokeLinecap="round">
        <Layer draw={(s) => s.river.map(([w, p], i) => <polyline key={i} points={p} strokeWidth={w} />)} />
      </g>
      <Roads kind="tertiary" color="#cfcdb2" width="9" />
      <Roads kind="tertiary" color="#fdf8d6" width="5" />
      <Roads kind="rail" color="#b4b4b4" width="4" />
      <g strokeDasharray="18 12"><Roads kind="rail" color="#868686" width="3" /></g>
      <Roads kind="secondary" color="#dccb86" width="12" />
      <Roads kind="secondary" color="#fef091" width="8" />
      <Roads kind="primary" color="#e29684" width="15" />
      <Roads kind="primary" color="#f6b2a2" width="11" />
      <Roads kind="motorway" color="#c56a94" width="21" />
      <Roads kind="motorway" color="#dc84ab" width="16" />
      <Roads kind="motorway" color="#c9719a" width="2" />

      <Layer
        draw={(s) => points(s.station).map(([x, y], i) => (
          <g key={i} transform={`translate(${x} ${y})`}>
            <rect x="-13" y="-13" width="26" height="26" fill="#e8e8e8" stroke="#777" strokeWidth="2" />
            <rect x="-7" y="-8" width="14" height="12" rx="2" fill="none" stroke="#444" strokeWidth="3" />
            <path d="M-7 -2H7M-6 9H6" stroke="#444" strokeWidth="3" />
          </g>
        ))}
      />
      <Layer
        draw={(s) => points(s.s).map(([x, y], i) => (
          <g key={i} transform={`translate(${x} ${y})`}>
            <circle r="13" fill="#3f9f4b" stroke="#e6f2e6" strokeWidth="2" />
            <path d="M6 -6C2 -9 -6 -8 -6 -4C-6 1 6 -1 6 4C6 9 -3 9 -7 6" fill="none" stroke="#fff" strokeWidth="4" />
          </g>
        ))}
      />
      <Layer
        draw={(s) => s.shields.map(([t, x, y], i) => {
          const w = t.length > 2 ? 54 : 46;
          return (
            <g key={i}>
              <rect x={x - w / 2} y={y - 14} width={w} height="28" rx="3" fill="#f6e7a6" stroke="#5c584a" strokeWidth="3" />
              <text x={x} y={y + 9} fontSize="24" fontWeight="700" textAnchor="middle" fill="#333">{t}</text>
            </g>
          );
        })}
      />
      <Layer
        draw={(s) => s.autobahn.map(([t, x, y], i) => (
          <g key={i} transform={`translate(${x} ${y})`}>
            <path d="M-22 -19H22L31 -8V8L22 19H-22L-31 8V-8Z" fill="#5e8bc8" stroke="#dfe9f5" strokeWidth="3" />
            <text y="9" fontSize="24" fontWeight="700" textAnchor="middle" fill="#fff">{t}</text>
          </g>
        ))}
      />
      <Names kind="works" size={27} color="#5d6a80" />
      <Names kind="parks" size={27} color="#538866" />
      <Names kind="waters" size={27} color="#4a88cf" italic />
      <Names kind="towns" size={33} color="#33333d" />
      <Names kind="city" size={60} color="#33333d" />
      <g fill="#151515" textAnchor="middle">
        <Layer
          draw={(s) => s.streets.map(([t, x, y, a, size], i) => (
            <text key={i} transform={`translate(${x} ${y}) rotate(${a})`} y={size * 0.36} fontSize={size}>{t}</text>
          ))}
        />
      </g>

      <g fill="none" stroke="#00007f" strokeWidth="17" strokeLinejoin="round" strokeLinecap="butt">
        <polyline points="1316,868 1350,905 1404,938 1450,957 2246,1080 2270,1210 2315,1320 2350,1400 2400,1440 2494,1436" />
        <polyline points="1338,895 1368,970 1363,1030 1350,1058 1480,1130 1575,1200 1660,1285 1733,1322 1680,1382 1845,1575" />
        <polyline points="2270,1575 2295,1535 2306,1500 2303,1464 2400,1450" />
        <polyline points="2306,1496 2360,1530 2420,1575" />
      </g>
      <Pin x={1335} y={886} />
      <Pin x={2493} y={1443} />
      <Pin x={2360} y={1545} />
      <Pin x={2415} y={1659} />
    </MapSvg>
  );
}

export default function App() {
  const profileId = useId();
  return (
    <Page>
      <GlobalStyle />
      <Decoration />
      <Sidebar>
        <Form onSubmit={(e) => e.preventDefault()}>
          <Slider first label="Fixed cost" max={10} initial={[7]} />
          <Slider label="Distance cost (per km)" max={10} initial={[5]} />
          <Slider label="Time cost (per Hour)" max={20} initial={[11]} />
          <TextField label="Vehicle capacity (Boxes)" value="2000" />
          <TextField label="No. of Vehicles" value="5" />
          <Field>
            <Label htmlFor={profileId}>Vehicle Profile</Label>
            <SelectWrap>
              <Select id={profileId} defaultValue="car">
                <option>car</option>
                <option>scania</option>
              </Select>
              <Caret width="14" height="9" viewBox="0 0 14 9" aria-hidden="true">
                <path d="M0 0H14L7 9Z" fill="#fafafa" />
              </Caret>
            </SelectWrap>
          </Field>
          <Slider label="Vehicle shift:" max={23} initial={[6, 23]} />
          <CheckRow>
            <CheckBox type="checkbox" />
            Show Request/Response
          </CheckRow>
          <Submit type="submit">Submit</Submit>
        </Form>
        <ScrollThumb />
      </Sidebar>
      <Main>
        <Heading $first>Plan</Heading>
        <DataTable columns={planColumns} rows={planRows} />
        <Heading>Fleet</Heading>
        <DataTable columns={fleetColumns} rows={fleetRows} />
        <Heading>Solution</Heading>
        <DataTable columns={solutionColumns} rows={solutionRows} />
        <MapBox>
          <BerlinMap />
          <Zoom>
            <ZoomButton type="button" aria-label="Zoom in">
              <svg width="20" height="20" viewBox="0 0 20 20"><path d="M10 0V20M0 10H20" stroke="#000" strokeWidth="4" /></svg>
            </ZoomButton>
            <ZoomButton type="button" aria-label="Zoom out">
              <svg width="20" height="20" viewBox="0 0 20 20"><path d="M0 10H20" stroke="#000" strokeWidth="4" /></svg>
            </ZoomButton>
          </Zoom>
        </MapBox>
      </Main>
      <WindowEdge />
    </Page>
  );
}
